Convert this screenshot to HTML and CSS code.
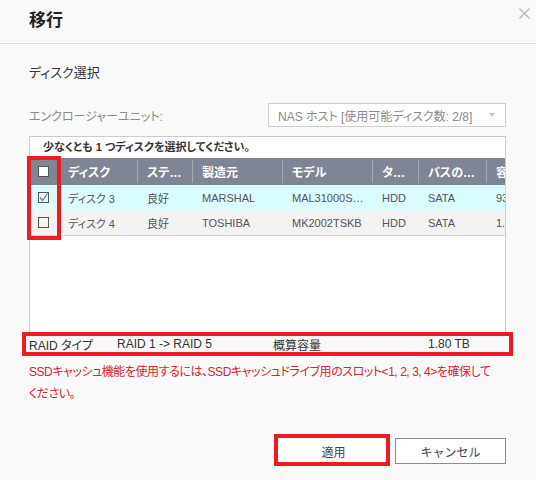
FILE: index.html
```html
<!DOCTYPE html>
<html lang="ja">
<head>
<meta charset="utf-8">
<title>移行</title>
<link rel="stylesheet" href="styles.css">
</head>
<body>
<div class="dialog">
  <div class="header">
    <h1 class="title">移行</h1>
    <button class="close" aria-label="閉じる">
      <svg width="11" height="11" viewBox="0 0 11 11"><path d="M0.5 0.5 L10.5 10.5 M10.5 0.5 L0.5 10.5" stroke="#b5b5b5" stroke-width="1.2" fill="none"/></svg>
    </button>
  </div>
  <div class="content">
    <h2 class="section">ディスク選択</h2>
    <div class="field">
      <span class="label">エンクロージャーユニット:</span>
      <div class="select">
        <span class="select-text">NAS ホスト [使用可能ディスク数: 2/8]</span>
        <span class="arrow"></span>
      </div>
    </div>
    <div class="frame">
      <div class="clip">
        <div class="caption">少なくとも 1 つディスクを選択してください。</div>
        <div class="row head">
          <div class="cell cb"><span class="box"></span></div>
          <div class="cell first">ディスク</div>
          <div class="cell sep">ステ…</div>
          <div class="cell sep">製造元</div>
          <div class="cell sep">モデル</div>
          <div class="cell sep">タ…</div>
          <div class="cell sep">バスの…</div>
          <div class="cell sep">容量</div>
        </div>
        <div class="row sel">
          <div class="cell cb"><span class="box checked"><svg width="11" height="11" viewBox="0 0 11 11"><path d="M2 5.5 L4.5 8.5 L9.5 1.5" stroke="#777" stroke-width="1.2" fill="none"/></svg></span></div>
          <div class="cell first">ディスク 3</div>
          <div class="cell">良好</div>
          <div class="cell">MARSHAL</div>
          <div class="cell">MAL31000S…</div>
          <div class="cell">HDD</div>
          <div class="cell">SATA</div>
          <div class="cell">931.51 GB</div>
        </div>
        <div class="row alt">
          <div class="cell cb"><span class="box"></span></div>
          <div class="cell first">ディスク 4</div>
          <div class="cell">良好</div>
          <div class="cell">TOSHIBA</div>
          <div class="cell">MK2002TSKB</div>
          <div class="cell">HDD</div>
          <div class="cell">SATA</div>
          <div class="cell">1.82 TB</div>
        </div>
      </div>
      <div class="mark mark-cb"></div>
    </div>
    <div class="raid">
      <span>RAID タイプ</span>
      <span>RAID 1 -&gt; RAID 5</span>
      <span>概算容量</span>
      <span>1.80 TB</span>
      <div class="mark mark-raid"></div>
    </div>
    <p class="warn">SSDキャッシュ機能を使用するには、SSDキャッシュドライブ用のスロット&lt;1, 2, 3, 4&gt;を確保してください。</p>
    <div class="footer">
      <button class="btn apply">適用<span class="mark mark-btn"></span></button>
      <button class="btn">キャンセル</button>
    </div>
  </div>
</div>
</body>
</html>
```
FILE: styles.css
```css
* { box-sizing: border-box; }
html, body { margin: 0; padding: 0; }
body {
  background: #f9f9f9;
  font-family: "Liberation Sans", "Noto Sans CJK JP", sans-serif;
  font-feature-settings: "palt";
  color: #333;
  width: 536px;
  height: 480px;
  overflow: hidden;
}
.dialog { width: 536px; }
.header {
  height: 44px;
  border-bottom: 1px solid #dedede;
  display: flex;
  justify-content: space-between;
  align-items: flex-start;
  padding-left: 29px;
}
.title {
  margin: 0;
  font-size: 17px;
  font-weight: bold;
  line-height: 42px;
  color: #222;
}
.close {
  border: 0;
  background: none;
  padding: 0;
  margin: 8px 6px 0 0;
  width: 11px;
  height: 11px;
  display: block;
}
.close svg { display: block; }
.content { padding: 0 30px 0 29px; }
.section {
  margin: 20px 0 0;
  font-size: 13px;
  font-weight: normal;
  line-height: 18px;
  color: #333;
}
.field {
  display: flex;
  align-items: center;
  margin-top: 21px;
  height: 24px;
}
.label {
  width: 239px;
  font-size: 12px;
  color: #8a8a8a;
}
.select {
  flex: 1;
  height: 24px;
  border: 1px solid #cfcfcf;
  background: #fff;
  display: flex;
  align-items: center;
  justify-content: space-between;
  padding: 0 10px 0 9px;
}
.select-text { font-size: 12px; color: #8a8a8a; }
.arrow {
  width: 0; height: 0;
  border-left: 3.5px solid transparent;
  border-right: 3.5px solid transparent;
  border-top: 4px solid #c4c4c4;
}
.frame {
  position: relative;
  margin-top: 9px;
  height: 196px;
  border: 1px solid #cccccc;
  border-bottom: 0;
  background: #fff;
}
.clip { overflow: hidden; height: 100%; }
.caption {
  height: 21px;
  line-height: 21px;
  padding-left: 13px;
  font-size: 11px;
  font-weight: bold;
  color: #333;
}
.row {
  display: grid;
  grid-template-columns: 31px 76px 55px 90px 90px 46px 68px 80px;
  width: 536px;
  height: 25px;
  align-items: center;
  font-size: 11px;
  color: #555;
}
.row.head {
  height: 27px;
  background: #7f8595;
  color: #fff;
  font-size: 12px;
  font-weight: bold;
}
.row.sel { background: #dafcfc; }
.row.alt { background: #f3f3f3; height: 26px; border-bottom: 1px solid #d6d6d6; }
.cell {
  white-space: nowrap;
  overflow: hidden;
  padding-left: 10px;
  height: 100%;
  display: flex;
  align-items: center;
}
.cell.first { padding-left: 7px; }
.cell.cb { padding-left: 8px; }
.head .cell.sep { border-left: 1px solid #a3a8b3; padding-left: 9px; }
.head .cell.sep { height: 23px; }
.box {
  width: 11px;
  height: 11px;
  border: 1px solid #555;
  background: #fff;
  display: block;
  position: relative;
}
.box svg { position: absolute; left: -1px; top: -1px; }
.row.sel .box, .row.alt .box { background: transparent; }
.mark {
  position: absolute;
  border: 4px solid #ec1c24;
  pointer-events: none;
}
.mark-cb { left: -3px; top: 19px; width: 34px; height: 84px; }
.raid {
  position: relative;
  height: 24px;
  display: grid;
  grid-template-columns: 88px 156px 155px 1fr;
  align-items: center;
  font-size: 12px;
  color: #333;
}
.mark-raid { left: -7px; right: -7px; top: 0; bottom: 0; }
.warn {
  margin: 5px 0 0;
  font-size: 12px;
  letter-spacing: -0.45px;
  line-height: 22px;
  color: #d3262d;
  width: 466px;
}
.footer {
  display: flex;
  justify-content: flex-end;
  gap: 6px;
  margin-top: 33px;
}
.btn {
  position: relative;
  width: 111px;
  height: 26px;
  border: 1px solid #8c8c8c;
  background: #fff;
  font-family: inherit;
  font-size: 12px;
  color: #444;
  padding: 0;
}
.apply { border: 0; }
.mark-btn { left: -4px; top: -4px; width: 116px; height: 32px; }
```
